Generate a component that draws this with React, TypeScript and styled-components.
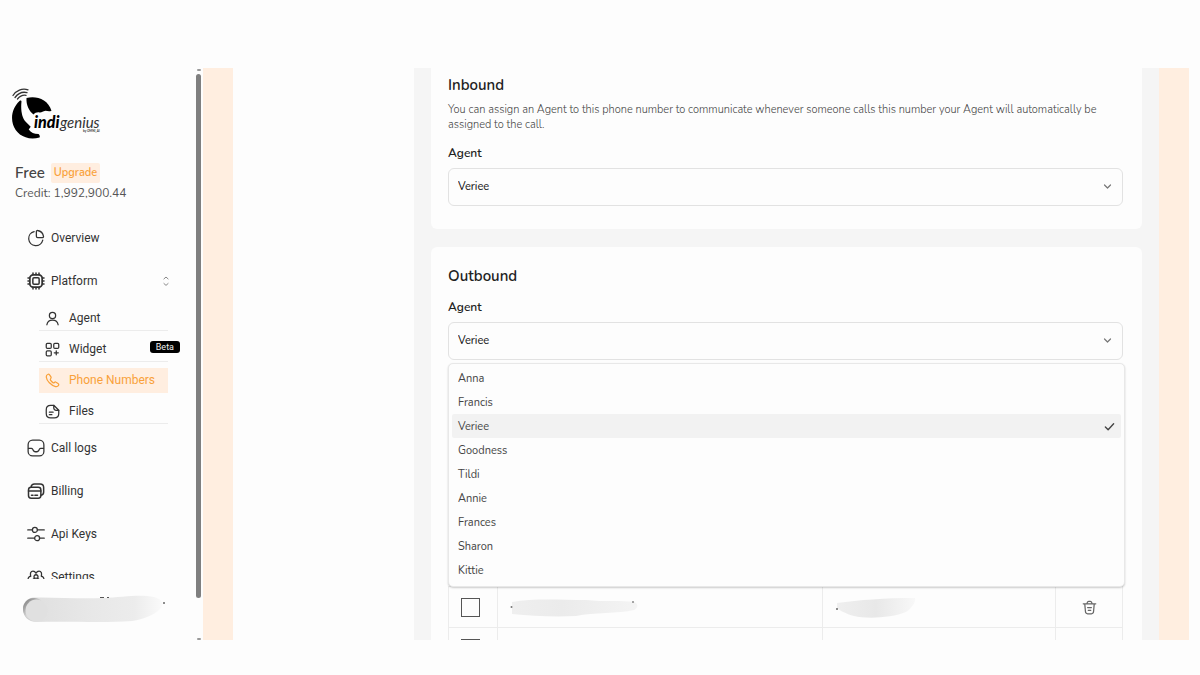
import React, { useState } from "react";
import styled, { createGlobalStyle } from "styled-components";

const text = `"Nunito", "Lato", "Noto Sans", sans-serif`;
const ui = `"Roboto", "Liberation Sans", sans-serif`;

const Global = createGlobalStyle`
  *, *::before, *::after { box-sizing: border-box; }
  body { margin: 0; background: #fdfdfd; font-family: ${text}; color: #222; }
  h2, p, ul { margin: 0; padding: 0; }
  ul { list-style: none; }
  button, select, input { font: inherit; color: inherit; }
`;

const Page = styled.div`
  height: 100vh;
  padding: 68px 11px 35px 0;
`;

const Frame = styled.div`
  display: flex;
  height: 100%;
  overflow: hidden;
`;

const Sidebar = styled.aside`
  display: flex;
  flex-direction: column;
  flex: 0 0 196px;
  min-height: 0;
`;

const Brand = styled.div`
  height: 92px;
  padding: 20px 0 0 11px;
  svg { display: block; }
`;

const Plan = styled.div`
  padding: 3px 0 0 15px;
  height: 56px;
`;

const PlanRow = styled.div`
  display: flex;
  align-items: center;
  gap: 6px;
  font-size: 15px;
  font-weight: 600;
  line-height: 20px;
  color: #444;
`;

const Upgrade = styled.button`
  height: 20px;
  padding: 0 3px;
  border: 0;
  border-radius: 2px;
  background: #ffeee0;
  color: #f9a13a;
  font-size: 11px;
  line-height: 20px;
`;

const Credit = styled.p`
  font-size: 12px;
  line-height: 20px;
  color: #555;
`;

const Nav = styled.nav`
  flex: 1 1 0;
  min-height: 0;
  overflow: hidden;
  font-family: ${ui};
`;

const NavLink = styled.a`
  display: flex;
  align-items: center;
  gap: 6px;
  height: 43px;
  padding: 0 25px 0 27px;
  color: #333;
  font-size: 12px;
  text-decoration: none;
  svg { flex: none; }
  svg:last-child:not(:first-child) { margin-left: auto; color: #888; }
`;

const SubList = styled.ul`
  display: flex;
  flex-direction: column;
  gap: 6px;
  padding: 4px 0 2px 39px;
`;

const SubLink = styled.a<{ $active?: boolean }>`
  display: flex;
  align-items: center;
  gap: 9px;
  width: 129px;
  height: 25px;
  padding-left: 6px;
  border-bottom: 1px solid ${(p) => (p.$active ? "#ffeee0" : "#ececec")};
  background: ${(p) => (p.$active ? "#ffeee0" : "transparent")};
  color: ${(p) => (p.$active ? "#f9a13a" : "#333")};
  font-size: 12px;
  text-decoration: none;
  white-space: nowrap;
  svg { flex: none; }
`;

const Beta = styled.span`
  flex: none;
  margin: 0 -12px 4px auto;
  padding: 0 6px;
  border-radius: 3px;
  background: #000;
  color: #eee;
  font-size: 9px;
  line-height: 12px;
`;

const Account = styled.div`
  flex: 0 0 61px;
  padding: 14px 0 0 20px;
  svg { display: block; }
`;

const ScrollTrack = styled.div`
  display: flex;
  flex-direction: column;
  align-items: center;
  flex: 0 0 7px;
  padding: 1px 2px 0 0;
`;

const ScrollArrow = styled.span`
  width: 4px;
  height: 2px;
  border-radius: 1px;
  background: #9a9a9a;
`;

const ScrollThumb = styled.span`
  width: 5px;
  flex: 0 1 524px;
  margin: 3px 0 auto;
  border-radius: 3px;
  background: #7f7f7f;
`;

const Band = styled.div`
  flex: 0 0 30px;
  background: #ffeee0;
`;

const Gutter = styled.div`
  flex: 0 0 181px;
`;

const Main = styled.main`
  display: flex;
  flex-direction: column;
  gap: 18px;
  flex: 1 1 0;
  min-width: 0;
  overflow: hidden;
  padding: 0 17px;
  background: #f5f5f5;
`;

const Card = styled.section<{ $first?: boolean }>`
  flex: none;
  padding: ${(p) => (p.$first ? "7px 19px 23px 17px" : "19px 19px 24px 17px")};
  border-radius: ${(p) => (p.$first ? "0 0 6px 6px" : "6px")};
  background: #fdfdfd;
`;

const Title = styled.h2`
  font-size: 15px;
  font-weight: 600;
  line-height: 20px;
  color: #222;
`;

const Note = styled.p`
  margin-top: 7px;
  font-size: 11px;
  font-weight: 300;
  line-height: 15px;
  color: #444;
`;

const Label = styled.label`
  display: block;
  margin: 13px 0 7px;
  font-size: 12px;
  font-weight: 600;
  line-height: 16px;
`;

const Field = styled.div`
  position: relative;
  > svg {
    position: absolute;
    right: 11px;
    top: 14px;
    color: #777;
    pointer-events: none;
  }
`;

const Select = styled.select`
  display: block;
  width: 100%;
  height: 38px;
  padding: 0 9px 2px;
  border: 1px solid #e2e2e2;
  border-radius: 6px;
  background: #fdfdfd;
  font-size: 11px;
  font-weight: 500;
  appearance: none;
  outline: 0;
`;

const Menu = styled.ul`
  position: absolute;
  z-index: 1;
  top: 41px;
  left: 0;
  right: -2px;
  padding: 2px 3px 4px;
  border: 1px solid #e8e8e8;
  border-radius: 5px;
  background: #fdfdfd;
  box-shadow: 0 1px 2px rgba(0, 0, 0, 0.2);
`;

const Option = styled.button<{ $on: boolean }>`
  display: flex;
  align-items: center;
  justify-content: space-between;
  width: 100%;
  height: 24px;
  padding: 0 6px;
  border: 0;
  border-radius: 2px;
  background: ${(p) => (p.$on ? "#f2f2f2" : "transparent")};
  color: #444;
  font-size: 11px;
`;

const Numbers = styled.table`
  width: 100%;
  margin-top: 226px;
  border-collapse: collapse;
  table-layout: fixed;
`;

const Cell = styled.td`
  height: 41px;
  padding: 0 12px;
  border: 1px solid #ececec;
  svg { display: block; }
`;

const Col = styled.col<{ $w: string }>`
  width: ${(p) => p.$w};
`;

const Check = styled.input`
  display: block;
  width: 19px;
  height: 19px;
  margin: 0;
  border: 1px solid #555;
  background: #fdfdfd;
  appearance: none;
`;

const IconButton = styled.button`
  display: block;
  margin: 0 auto;
  padding: 0;
  border: 0;
  background: none;
  color: #666;
`;

const paths: Record<string, React.ReactNode> = {
  overview: (
    <>
      <path d="M9.500 3.400A9.500 9.500 0 1 0 21 14.800" />
      <path d="M12.500 3.500c0-1 .8-1.700 1.800-1.500a9.500 9.500 0 0 1 7.700 7.700c.2 1-.5 1.800-1.500 1.800h-6.200c-1 0-1.800-.8-1.800-1.800Z" />
    </>
  ),
  platform: (
    <>
      <rect x="3.800" y="3.800" width="16.400" height="16.400" rx="4.500" strokeWidth="2.300" />
      <rect x="7.800" y="7.800" width="8.400" height="8.400" rx="1.500" strokeWidth="2" />
      <path
        d="M8 1.300v2M12 1.300v2M16 1.300v2M8 20.700v2M12 20.700v2M16 20.700v2M1.300 8h2M1.300 12h2M1.300 16h2M20.700 8h2M20.700 12h2M20.700 16h2"
        strokeWidth="2"
      />
    </>
  ),
  agent: (
    <>
      <circle cx="12" cy="7" r="5" />
      <path d="M3 22c.8-5 4.300-7.500 9-7.500s8.200 2.500 9 7.500" />
    </>
  ),
  widget: (
    <>
      <rect x="2" y="2" width="8" height="8" rx="1.800" />
      <rect x="14" y="2" width="8" height="8" rx="1.800" />
      <rect x="2" y="14" width="8" height="8" rx="1.800" />
      <path d="M18 14v6.500M14.800 17.200h6.500" />
    </>
  ),
  phone: (
    <path d="M22 18.300c0 1-.6 2-1.500 2.700-1 .8-2.200 1.100-3.600.8-3.500-.6-7-3.200-9.900-6.100C4.200 12.700 2.200 9.500 2 6.500 1.900 4.500 3.200 2.600 5 2c1-.2 1.700.2 2.300 1l2.200 3.200c.7 1.100.5 1.800-.4 2.700-.9 1-1 1.400-.3 2.500 1 1.500 2.300 2.900 3.900 4 1 .7 1.400.6 2.300-.3 1-.9 1.700-1.100 2.700-.4l3.100 2c.8.500 1.200 1 1.200 1.600Z" />
  ),
  files: (
    <>
      <path d="M22 10v5c0 5-2 7-7 7H9c-5 0-7-2-7-7V9c0-5 2-7 7-7h5" />
      <path d="M22 10h-4c-3 0-4-1-4-4V2Z" />
      <path d="M7 13h6M7 17h4" />
    </>
  ),
  calls: (
    <>
      <rect x="1.500" y="1.500" width="21" height="21" rx="6" />
      <path d="M2 12.500h3.800c.8 0 1.400.4 1.800 1.100l1 2c.6 1 1.300 1.400 2.300 1.400h2.300c1 0 1.700-.4 2.300-1.400l1-2c.4-.7 1-1.100 1.800-1.100H22" />
    </>
  ),
  billing: (
    <>
      <rect x="2" y="7" width="16.500" height="14.500" rx="3.500" strokeWidth="2" />
      <path d="M2 12h16.500M6 17.500h2M10.500 17.500h3.500" strokeWidth="2" />
      <path d="M5.500 6.500C5.800 3.800 7 2.500 10 2.500h7.500c3.500 0 4.700 1.300 4.700 4.700v6c0 2.800-1 4-3.500 4.500" strokeWidth="2" />
    </>
  ),
  keys: (
    <>
      <path d="M1 6.500h6M14 6.500h9M1 17.500h9M17 17.500h6" />
      <circle cx="10.500" cy="6.500" r="3.300" />
      <circle cx="13.500" cy="17.500" r="3.300" />
    </>
  ),
  settings: (
    <>
      <path d="M1.500 16c-.3-3 1-4.800 3.500-5C4 7 5 4.300 8 4.300c1.800 0 3 .9 4 2.700 1-1.800 2.200-2.700 4-2.700 3 0 4 2.700 3 6.700 2.500.2 3.800 2 3.500 5" />
      <path d="M9.500 13c-.6-2.500.5-4 2.500-4s3.100 1.500 2.500 4M7 18c.3-3 2-4.500 5-4.500s4.700 1.500 5 4.500" />
    </>
  ),
  trash: (
    <path d="M2 6h20M8 5.500c.3-2.300.8-3.500 2.500-3.500h3c1.700 0 2.200 1.200 2.500 3.500M4.500 7l1 11.500c.2 2.500 1 3.500 3.500 3.500h6c2.500 0 3.300-1 3.500-3.500l1-11.500M9 12h6M10 16.500h4" />
  ),
  sort: <path d="m7 7 5-4.500L17 7M7 18l5 4.500 5-4.500" />,
  chevron: <path d="m4 8 8 8 8-8" />,
  tick: <path d="m3 13 6 6L21 6" />,
};

const Icon = ({ name, size, stroke = 1.7 }: { name: string; size: number; stroke?: number }) => (
  <svg
    width={size}
    height={size}
    viewBox="0 0 24 24"
    fill="none"
    stroke="currentColor"
    strokeWidth={stroke}
    strokeLinecap="round"
    strokeLinejoin="round"
    aria-hidden="true"
  >
    {paths[name]}
  </svg>
);

const Logo = () => (
  <svg width="100" height="54" viewBox="0 0 100 54" role="img" aria-label="indigenius">
    <g fill="none" stroke="#333" strokeWidth="1.300" strokeLinecap="round">
      <path d="M2 7.500C5 2.500 11 0 17 1.800" />
      <path d="M4 9.500C7 5.500 11.500 3.500 16 4.600" />
      <path d="M6.500 11C9 8 12 6.800 15 7.300" />
    </g>
    <path d="M8.500 13C2 19 -.5 28 2 36.500 5 46 15 53 28.500 49.500c.7-1 .2-2.500-1-3.500-4.500 0-7.500-1.500-9.800-4.500l2-2.800-5-5C11 30 9.500 22 10.500 13.500c0-1-1-1.300-2-.5Z" />
    <path d="M15.500 10C25 7.500 37 11 40.500 22.800c-2.500 1-4 .2-6-.1-3 .3-3.500 2-6 1.700-2.500-.4-4.500.3-6 2.100C18 23 15 17 15.500 10Z" />
    <text x="23" y="40" fontFamily="Lato, sans-serif" fontSize="16" fontStyle="italic" fontWeight="900">
      indi
    </text>
    <text x="49" y="40" fontFamily="Lato, sans-serif" fontSize="15" fontStyle="italic" fontWeight="400" fill="#333">
      genius
    </text>
    <text x="72" y="44" fontFamily="Lato, sans-serif" fontSize="3" fontWeight="700" fill="#333">
      by OMNI_AI
    </text>
  </svg>
);

const AccountSmudge = () => (
  <svg width="148" height="34" viewBox="0 0 148 34" aria-hidden="true">
    <defs>
      <linearGradient id="acct">
        <stop offset="0" stopColor="#c4c4c4" />
        <stop offset="0.1" stopColor="#e0e0e0" />
        <stop offset="0.5" stopColor="#e8e8e8" />
        <stop offset="0.8" stopColor="#ececec" />
        <stop offset="1" stopColor="#fafafa" />
      </linearGradient>
      <linearGradient id="edge" x1="0" y1="0" x2="1" y2="1">
        <stop offset="0" stopColor="#6f6f6f" />
        <stop offset="0.5" stopColor="#d8d8d8" />
      </linearGradient>
    </defs>
    <path
      d="M14 4.500C34 4 60 6 82 5s38-4 52-1c8 2 11 7 6 12-6 6-16 10-28 12-28 2-66 0-95 1C8 29 3 23 3 16S8 5 14 4.500Z"
      fill="url(#acct)"
    />
    <circle cx="14" cy="16" r="11" fill="url(#edge)" />
    <circle cx="16.500" cy="17.500" r="11" fill="#e0e0e0" />
    <path d="M80 4.500h4M87 4.500h2" stroke="#555" />
    <circle cx="144" cy="10" r="1" fill="#666" />
  </svg>
);

const NumberSmudge = () => (
  <svg width="130" height="20" viewBox="0 0 130 20" aria-hidden="true">
    <defs>
      <linearGradient id="number">
        <stop offset="0" stopColor="#efefef" />
        <stop offset="0.4" stopColor="#ebebeb" />
        <stop offset="1" stopColor="#f4f4f4" />
      </linearGradient>
    </defs>
    <path d="M2 5C24 1 50 3 76 3c18 2 36 0 48 2 5 2 4 6 0 8-16 4-40 2-58 6-22 1-44 0-64-2Z" fill="url(#number)" />
    <circle cx="1.500" cy="10" r="1" fill="#777" />
    <circle cx="123" cy="5" r="1" fill="#888" />
  </svg>
);

const NameSmudge = () => (
  <svg width="84" height="24" viewBox="0 0 84 24" aria-hidden="true">
    <defs>
      <linearGradient id="name">
        <stop offset="0" stopColor="#efefef" />
        <stop offset="0.5" stopColor="#e8e8e8" />
        <stop offset="1" stopColor="#f8f8f8" />
      </linearGradient>
    </defs>
    <path d="M2 8C24 5 50 3 80 3c1 4-3 10-9 14-14 6-40 7-52 4C11 19 4 15 2 13Z" fill="url(#name)" />
    <circle cx="2" cy="14" r="1" fill="#666" />
  </svg>
);

const agents = ["Anna", "Francis", "Veriee", "Goodness", "Tildi", "Annie", "Frances", "Sharon", "Kittie"];

const subLinks = [
  { name: "Agent", icon: "agent" },
  { name: "Widget", icon: "widget", beta: true },
  { name: "Phone Numbers", icon: "phone", active: true },
  { name: "Files", icon: "files" },
];

const lowerLinks = [
  { name: "Call logs", icon: "calls" },
  { name: "Billing", icon: "billing" },
  { name: "Api Keys", icon: "keys" },
  { name: "Settings", icon: "settings" },
];

const AgentSelect = ({ id, value, onChange }: { id: string; value: string; onChange: (v: string) => void }) => (
  <>
    <Select id={id} value={value} onChange={(e) => onChange(e.target.value)}>
      {agents.map((a) => (
        <option key={a}>{a}</option>
      ))}
    </Select>
    <Icon name="chevron" size={9} stroke={3.2} />
  </>
);

export default function App() {
  const [inbound, setInbound] = useState("Veriee");
  const [outbound, setOutbound] = useState("Veriee");

  return (
    <Page>
      <Global />
      <Frame>
        <Sidebar>
          <Brand>
            <Logo />
          </Brand>
          <Plan>
            <PlanRow>
              Free <Upgrade type="button">Upgrade</Upgrade>
            </PlanRow>
            <Credit>Credit: 1,992,900.44</Credit>
          </Plan>
          <Nav>
            <NavLink href="#overview">
              <Icon name="overview" size={18} />
              Overview
            </NavLink>
            <NavLink href="#platform">
              <Icon name="platform" size={18} />
              Platform
              <Icon name="sort" size={10} stroke={2.4} />
            </NavLink>
            <SubList>
              {subLinks.map((l) => (
                <li key={l.name}>
                  <SubLink href={`#${l.icon}`} $active={l.active}>
                    <Icon name={l.icon} size={15} stroke={2} />
                    {l.name}
                    {l.beta && <Beta>Beta</Beta>}
                  </SubLink>
                </li>
              ))}
            </SubList>
            {lowerLinks.map((l) => (
              <NavLink key={l.name} href={`#${l.icon}`}>
                <Icon name={l.icon} size={18} />
                {l.name}
              </NavLink>
            ))}
          </Nav>
          <Account>
            <AccountSmudge />
          </Account>
        </Sidebar>
        <ScrollTrack>
          <ScrollArrow />
          <ScrollThumb />
          <ScrollArrow />
        </ScrollTrack>
        <Band />
        <Gutter />
        <Main>
          <Card $first>
            <Title>Inbound</Title>
            <Note>
              You can assign an Agent to this phone number to communicate whenever someone calls this number your Agent
              will automatically be assigned to the call.
            </Note>
            <Label htmlFor="inbound">Agent</Label>
            <Field>
              <AgentSelect id="inbound" value={inbound} onChange={setInbound} />
            </Field>
          </Card>
          <Card>
            <Title>Outbound</Title>
            <Label htmlFor="outbound">Agent</Label>
            <Field>
              <AgentSelect id="outbound" value={outbound} onChange={setOutbound} />
              <Menu>
                {agents.map((a) => (
                  <li key={a}>
                    <Option type="button" $on={a === outbound} onClick={() => setOutbound(a)}>
                      {a}
                      {a === outbound && <Icon name="tick" size={11} stroke={3} />}
                    </Option>
                  </li>
                ))}
              </Menu>
            </Field>
            <Numbers>
              <colgroup>
                <Col $w="49px" />
                <Col $w="auto" />
                <Col $w="233px" />
                <Col $w="67px" />
              </colgroup>
              <tbody>
                <tr>
                  <Cell>
                    <Check type="checkbox" aria-label="Select number" />
                  </Cell>
                  <Cell>
                    <NumberSmudge />
                  </Cell>
                  <Cell>
                    <NameSmudge />
                  </Cell>
                  <Cell>
                    <IconButton type="button" aria-label="Delete number">
                      <Icon name="trash" size={15} stroke={2} />
                    </IconButton>
                  </Cell>
                </tr>
                <tr>
                  <Cell>
                    <Check type="checkbox" aria-label="Select number" />
                  </Cell>
                  <Cell />
                  <Cell />
                  <Cell />
                </tr>
              </tbody>
            </Numbers>
          </Card>
        </Main>
        <Band />
      </Frame>
    </Page>
  );
}
